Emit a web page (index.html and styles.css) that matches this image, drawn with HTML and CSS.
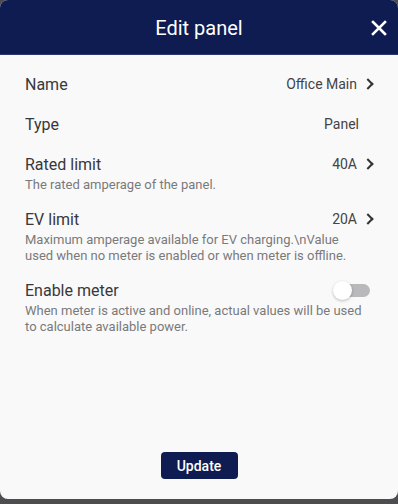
FILE: index.html
```html
<!DOCTYPE html>
<html lang="en">
<head>
   <meta charset="UTF-8">
   <meta name="viewport" content="width=device-width, initial-scale=1.0">
   <title>Edit panel</title>
   <link rel="stylesheet" href="styles.css">
</head>
<body>
   <div class="dialog">
       <div class="dialog-header">
           <h2>Edit panel</h2>
           <button class="close-btn" aria-label="Close">
               <svg width="16" height="16" viewBox="0 0 16 16">
                   <path d="M2 2 L14 14 M14 2 L2 14" stroke="#fff" stroke-width="2.6" stroke-linecap="square"/>
               </svg>
           </button>
       </div>

       <div class="dialog-body">
           <div class="setting">
               <div class="setting-row">
                   <span class="setting-title">Name</span>
                   <span class="setting-value">Office Main <span class="chevron"></span></span>
               </div>
           </div>
           <div class="setting">
               <div class="setting-row">
                   <span class="setting-title">Type</span>
                   <span class="setting-value no-chevron">Panel</span>
               </div>
           </div>
           <div class="setting">
               <div class="setting-row">
                   <span class="setting-title">Rated limit</span>
                   <span class="setting-value">40A <span class="chevron"></span></span>
               </div>
               <p class="setting-desc">The rated amperage of the panel.</p>
           </div>
           <div class="setting">
               <div class="setting-row">
                   <span class="setting-title">EV limit</span>
                   <span class="setting-value">20A <span class="chevron"></span></span>
               </div>
               <p class="setting-desc">Maximum amperage available for EV charging.\nValue used when no meter is enabled or when meter is offline.</p>
           </div>
           <div class="setting">
               <div class="setting-row">
                   <span class="setting-title">Enable meter</span>
                   <span class="toggle"><span class="toggle-thumb"></span></span>
               </div>
               <p class="setting-desc">When meter is active and online, actual values will be used to calculate available power.</p>
           </div>
       </div>

       <div class="dialog-footer">
           <button class="update-btn">Update</button>
       </div>
   </div>
</body>
</html>
```

FILE: styles.css
```css
body {
    margin: 0;
    background: #4d4d4f;
    font-family: Roboto, "Liberation Sans", sans-serif;
}

.dialog {
    width: 398px;
    height: 499px;
    background: #f9f9fa;
    border-radius: 8px;
    overflow: hidden;
    display: flex;
    flex-direction: column;
}

.dialog-header {
    position: relative;
    height: 55px;
    background: #0e1c51;
    display: flex;
    align-items: center;
    justify-content: center;
    border-bottom: 1px solid #2b3a70;
    box-sizing: border-box;
}

.dialog-header h2 {
    margin: 0;
    color: #fff;
    font-size: 20px;
    font-weight: 400;
    padding-top: 2px;
}

.close-btn {
    position: absolute;
    right: 11px;
    top: 20px;
    background: none;
    border: 0;
    padding: 0;
    width: 16px;
    height: 16px;
    cursor: pointer;
}

.close-btn svg {
    display: block;
}

.dialog-body {
    flex: 1;
    padding: 9px 23px 0 25px;
}

.setting {
    padding: 10px 0;
}

.setting-row {
    display: flex;
    justify-content: space-between;
    align-items: center;
    height: 20px;
}

.setting-title {
    font-size: 16px;
    color: #383838;
}

.setting-value {
    font-size: 14px;
    color: #444;
    display: flex;
    align-items: center;
}

.setting-value.no-chevron {
    margin-right: 16px;
}

.chevron {
    width: 6px;
    height: 6px;
    border-right: 2px solid #333;
    border-top: 2px solid #333;
    transform: rotate(45deg);
    margin-left: 7px;
    margin-right: 3px;
}

.setting-desc {
    margin: 3px 0 -4px;
    padding-right: 10px;
    font-size: 13px;
    line-height: 16px;
    color: #7a7a7a;
}

.toggle {
    position: relative;
    width: 30px;
    height: 13px;
    background: #b9b9bb;
    border-radius: 7px;
    margin-right: 5px;
}

.toggle-thumb {
    position: absolute;
    left: -7px;
    top: -3px;
    width: 19px;
    height: 19px;
    border-radius: 50%;
    background: #fff;
    box-shadow: 0 1px 3px rgba(0, 0, 0, 0.25);
}

.dialog-footer {
    display: flex;
    justify-content: center;
    padding-bottom: 20px;
}

.update-btn {
    background: #0e1c51;
    color: #fff;
    border: 0;
    border-radius: 4px;
    width: 77px;
    height: 27px;
    font-family: Roboto, "Liberation Sans", sans-serif;
    font-size: 14px;
    font-weight: 500;
    cursor: pointer;
}
```
